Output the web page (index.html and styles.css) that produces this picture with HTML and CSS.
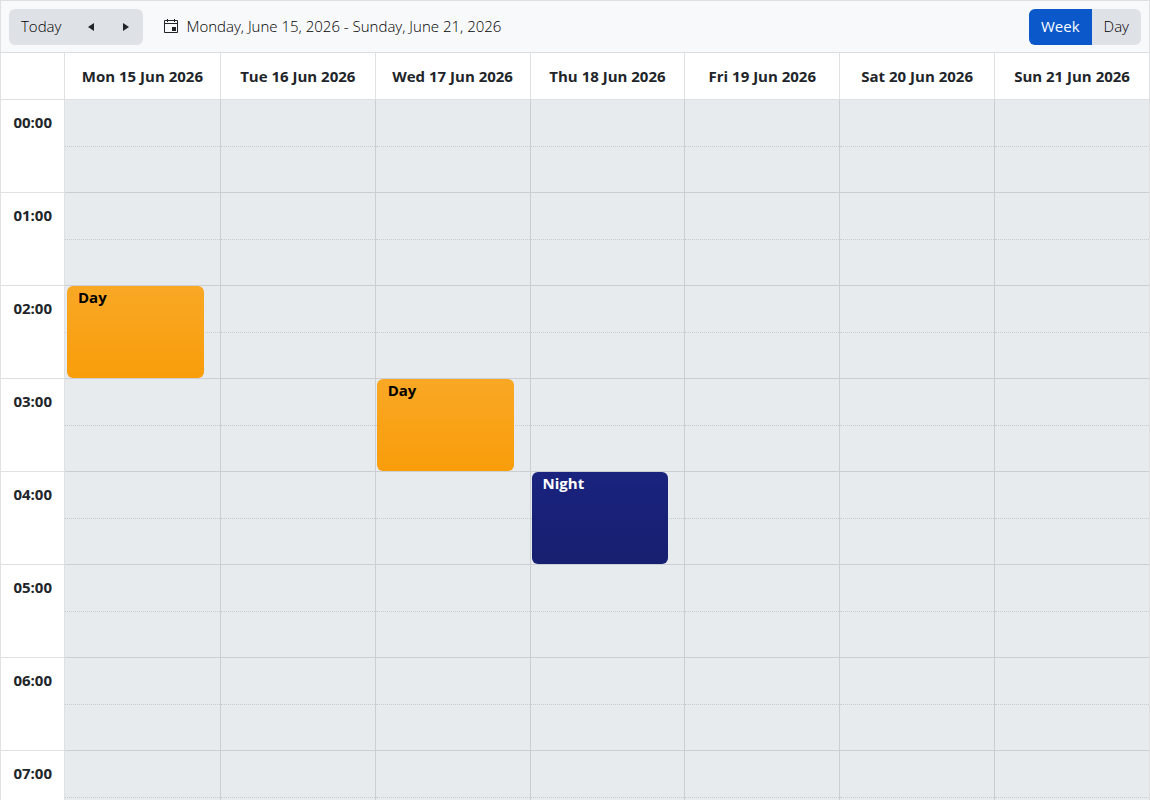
FILE: index.html
```html
<!DOCTYPE html>
<html lang="en">
<head>
    <meta charset="UTF-8">
    <meta name="viewport" content="width=device-width, initial-scale=1.0">
    <title>Scheduler</title>
    <link rel="stylesheet" href="styles.css">
</head>
<body>
    <div class="scheduler">
        <div class="toolbar">
            <div class="btn-group">
                <button type="button" class="btn">Today</button>
                <button type="button" class="btn btn-icon" aria-label="Previous">
                    <svg width="16" height="16" viewBox="0 0 16 16"><path d="M11 4v8L5 8z" fill="currentColor"/></svg>
                </button>
                <button type="button" class="btn btn-icon" aria-label="Next">
                    <svg width="16" height="16" viewBox="0 0 16 16"><path d="M5 4v8l6-4z" fill="currentColor"/></svg>
                </button>
            </div>
            <button type="button" class="btn-date">
                <svg width="16" height="16" viewBox="0 0 16 16">
                    <path d="M1.5 2.5h13v12h-13zM1.5 5.5h13M4.5 1v3M11.5 1v3" fill="none" stroke="currentColor"/>
                    <path d="M9 9h4v4H9z" fill="currentColor"/>
                </svg>
                <span>Monday, June 15, 2026 - Sunday, June 21, 2026</span>
            </button>
            <div class="btn-group views">
                <button type="button" class="btn selected">Week</button>
                <button type="button" class="btn">Day</button>
            </div>
        </div>

        <div class="content">
            <table class="week">
                <thead>
                    <tr>
                        <td class="time-col"></td>
                        <th>Mon 15 Jun 2026</th>
                        <th>Tue 16 Jun 2026</th>
                        <th>Wed 17 Jun 2026</th>
                        <th>Thu 18 Jun 2026</th>
                        <th>Fri 19 Jun 2026</th>
                        <th>Sat 20 Jun 2026</th>
                        <th>Sun 21 Jun 2026</th>
                    </tr>
                </thead>
                <tbody id="hours"></tbody>
            </table>
        </div>
    </div>

    <script>
        const startHour = 0;
        const endHour = 8;

        const events = [
            { day: 0, hour: 2, title: 'Day', type: 'day' },
            { day: 2, hour: 3, title: 'Day', type: 'day' },
            { day: 3, hour: 4, title: 'Night', type: 'night' }
        ];

        const hours = document.getElementById('hours');

        for (let hour = startHour; hour < endHour; hour++) {
            const row = document.createElement('tr');
            const label = String(hour).padStart(2, '0') + ':00';
            row.innerHTML = '<th class="time-col" scope="row">' + label + '</th>';

            for (let day = 0; day < 7; day++) {
                const cell = document.createElement('td');
                cell.className = 'slot';
                cell.innerHTML = '<div class="half"></div>';

                events.filter(e => e.day === day && e.hour === hour).forEach(e => {
                    const item = document.createElement('div');
                    item.className = 'event ' + e.type;
                    item.textContent = e.title;
                    cell.appendChild(item);
                });
                row.appendChild(cell);
            }
            hours.appendChild(row);
        }
    </script>
</body>
</html>
```
FILE: styles.css
```css
* {
    box-sizing: border-box;
}

body {
    margin: 0;
    font-family: "Open Sans", "Noto Sans", sans-serif;
    font-size: 15px;
    line-height: 20px;
    color: #212529;
    background: #fff;
}

button {
    font: inherit;
    color: inherit;
    border: none;
    cursor: pointer;
}

svg {
    display: block;
    color: #212529;
}

.scheduler {
    display: flex;
    flex-direction: column;
    height: 100vh;
    border: 1px solid #dee0e2;
    border-bottom: none;
}

.toolbar {
    display: flex;
    align-items: center;
    padding: 8px 8px 7px;
    font-weight: 300;
    color: #000;
    background: #f8f9fb;
    border-bottom: 1px solid #dcdee0;
}

.btn-group {
    display: flex;
    border-radius: 6px;
    overflow: hidden;
}

.btn {
    padding: 7px 12px 9px;
    background: #dee1e6;
}

.btn:hover {
    background: #d0d4da;
}

.btn-icon {
    display: flex;
    align-items: center;
    justify-content: center;
    width: 35px;
    padding: 8px;
}

.btn.selected {
    background: #0a58ca;
    color: #fff;
    font-weight: 400;
}

.btn-date {
    display: flex;
    align-items: center;
    gap: 7px;
    margin-left: 8px;
    padding: 7px 12px 9px;
    background: none;
}

.views {
    margin-left: auto;
}

.content {
    flex: 1;
    overflow: hidden;
}

.week {
    width: 100%;
    table-layout: fixed;
    border-collapse: separate;
    border-spacing: 0;
}

.week th,
.week td {
    padding: 0;
    border-bottom: 1px solid #dee0e2;
}

.week thead th {
    height: 47px;
    border-left: 1px solid #dee0e2;
}

.week .time-col {
    width: 64px;
    border-right: 1px solid #dee0e2;
}

.week tbody .time-col {
    padding: 12px;
    text-align: right;
    vertical-align: top;
}

.week .slot {
    position: relative;
    height: 93px;
    vertical-align: top;
    background: #e8ebee;
    border-left: 1px solid #cbcfd3;
    border-bottom-color: #cbcfd3;
}

.week tr .time-col + * {
    border-left: none;
}

.half {
    height: 47px;
    border-bottom: 1px dotted #c8ccd0;
}

.event {
    position: absolute;
    top: 0;
    left: 1px;
    right: 16px;
    height: 92px;
    padding: 1px 11px;
    border-radius: 6px;
    font-weight: bold;
}

.time-col + .slot .event {
    left: 2px;
}

.event.day {
    color: #000;
    background: linear-gradient(#f9a825, #f99d0a);
}

.event.night {
    color: #fff;
    background: linear-gradient(#1a237e, #171f70);
}
```
